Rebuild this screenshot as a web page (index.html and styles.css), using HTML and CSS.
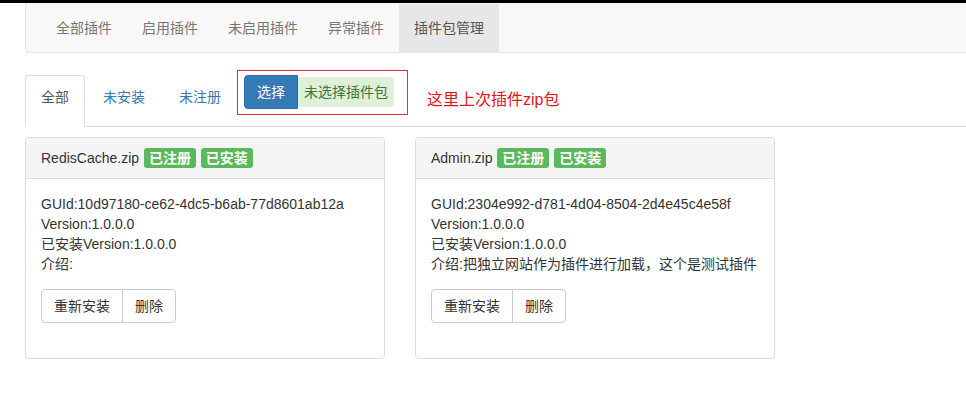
FILE: index.html
```html
<!DOCTYPE html>
<html lang="zh-CN">
<head>
    <meta charset="UTF-8">
    <meta name="viewport" content="width=device-width, initial-scale=1.0">
    <title>插件包管理</title>
    <link rel="stylesheet" href="styles.css">
</head>
<body>
    <div class="topbar"></div>
    <div class="container">
        <nav class="navbar">
            <ul class="navbar-nav">
                <li><a href="#">全部插件</a></li>
                <li><a href="#">启用插件</a></li>
                <li><a href="#">未启用插件</a></li>
                <li><a href="#">异常插件</a></li>
                <li class="active"><a href="#">插件包管理</a></li>
            </ul>
        </nav>

        <ul class="nav-tabs">
            <li class="tab active"><a href="#">全部</a></li>
            <li class="tab"><a href="#">未安装</a></li>
            <li class="tab"><a href="#">未注册</a></li>
            <li class="upload-box">
                <button type="button" class="btn-primary">选择</button>
                <span class="file-name">未选择插件包</span>
            </li>
            <li class="note">这里上次插件zip包</li>
        </ul>

        <div class="packages">
            <div class="panel">
                <div class="panel-heading">
                    RedisCache.zip
                    <span class="label">已注册</span>
                    <span class="label">已安装</span>
                </div>
                <div class="panel-body">
                    <p>GUId:10d97180-ce62-4dc5-b6ab-77d8601ab12a</p>
                    <p>Version:1.0.0.0</p>
                    <p>已安装Version:1.0.0.0</p>
                    <p>介绍:</p>
                    <div class="btn-group">
                        <button type="button" class="btn">重新安装</button>
                        <button type="button" class="btn">删除</button>
                    </div>
                </div>
            </div>
            <div class="panel">
                <div class="panel-heading">
                    Admin.zip
                    <span class="label">已注册</span>
                    <span class="label">已安装</span>
                </div>
                <div class="panel-body">
                    <p>GUId:2304e992-d781-4d04-8504-2d4e45c4e58f</p>
                    <p>Version:1.0.0.0</p>
                    <p>已安装Version:1.0.0.0</p>
                    <p>介绍:把独立网站作为插件进行加载，这个是测试插件</p>
                    <div class="btn-group">
                        <button type="button" class="btn">重新安装</button>
                        <button type="button" class="btn">删除</button>
                    </div>
                </div>
            </div>
        </div>
    </div>
</body>
</html>
```

FILE: styles.css
```css
body {
    margin: 0;
    font-family: "Liberation Sans", "Noto Sans CJK SC", sans-serif;
    font-size: 14px;
    line-height: 20px;
    color: #333;
    background-color: #fff;
}
a {
    text-decoration: none;
}
ul {
    list-style: none;
    margin: 0;
    padding: 0;
}
p {
    margin: 0;
}
.topbar {
    height: 3px;
    background-color: #000;
}
.container {
    margin-left: 25px;
}
.navbar {
    height: 48px;
    background-color: #f8f8f8;
    border: 1px solid #e7e7e7;
    border-top: 0;
    border-right: 0;
    border-radius: 0 0 0 4px;
    padding: 1px 15px 0;
    margin-bottom: 17px;
}
.navbar-nav {
    display: flex;
}
.navbar-nav a {
    display: block;
    padding: 14px 15px;
    color: #777;
}
.navbar-nav .active a {
    background-color: #e7e7e7;
    color: #555;
}
.nav-tabs {
    display: flex;
    align-items: flex-start;
    border-bottom: 1px solid #ddd;
}
.tab {
    margin-top: 5px;
    margin-bottom: -1px;
}
.tab a {
    display: block;
    margin-right: 2px;
    padding: 11px 15px 19px;
    border: 1px solid transparent;
    border-radius: 4px 4px 0 0;
    color: #337ab7;
}
.tab.active a {
    color: #555;
    background-color: #fff;
    border-color: #ddd #ddd transparent;
}
.upload-box {
    display: flex;
    margin-left: -2px;
    border: 1px solid #d9303a;
    padding: 4px 13px 5px 6px;
}
.btn-primary {
    font: inherit;
    height: 34px;
    padding: 6px 12px;
    color: #fff;
    background-color: #337ab7;
    border: 1px solid #2e6da4;
    border-radius: 4px 0 0 4px;
}
.file-name {
    display: block;
    margin: 2px 0;
    padding: 5px 6px;
    color: #3c763d;
    background-color: #dff0d8;
    border-radius: 0 4px 4px 0;
}
.note {
    margin: 20px 0 0 19px;
    font-size: 16px;
    color: #e3151c;
}
.packages {
    display: flex;
    gap: 30px;
    margin-top: 10px;
}
.panel {
    width: 358px;
    border: 1px solid #ddd;
    border-radius: 4px;
    box-shadow: 0 1px 1px rgba(0, 0, 0, 0.05);
}
.panel-heading {
    padding: 10px 15px;
    background-color: #f5f5f5;
    border-bottom: 1px solid #ddd;
    border-radius: 3px 3px 0 0;
}
.label {
    display: inline-block;
    padding: 0 5px;
    margin-left: 1px;
    font-weight: bold;
    color: #fff;
    background-color: #5cb85c;
    border-radius: 3px;
}
.panel-body {
    padding: 15px 15px 35px;
}
.btn-group {
    display: flex;
    margin-top: 15px;
}
.btn {
    font: inherit;
    height: 34px;
    padding: 6px 12px;
    color: #333;
    background-color: #fff;
    border: 1px solid #ccc;
}
.btn:first-child {
    border-radius: 4px 0 0 4px;
}
.btn:last-child {
    margin-left: -1px;
    border-radius: 0 4px 4px 0;
}
```
